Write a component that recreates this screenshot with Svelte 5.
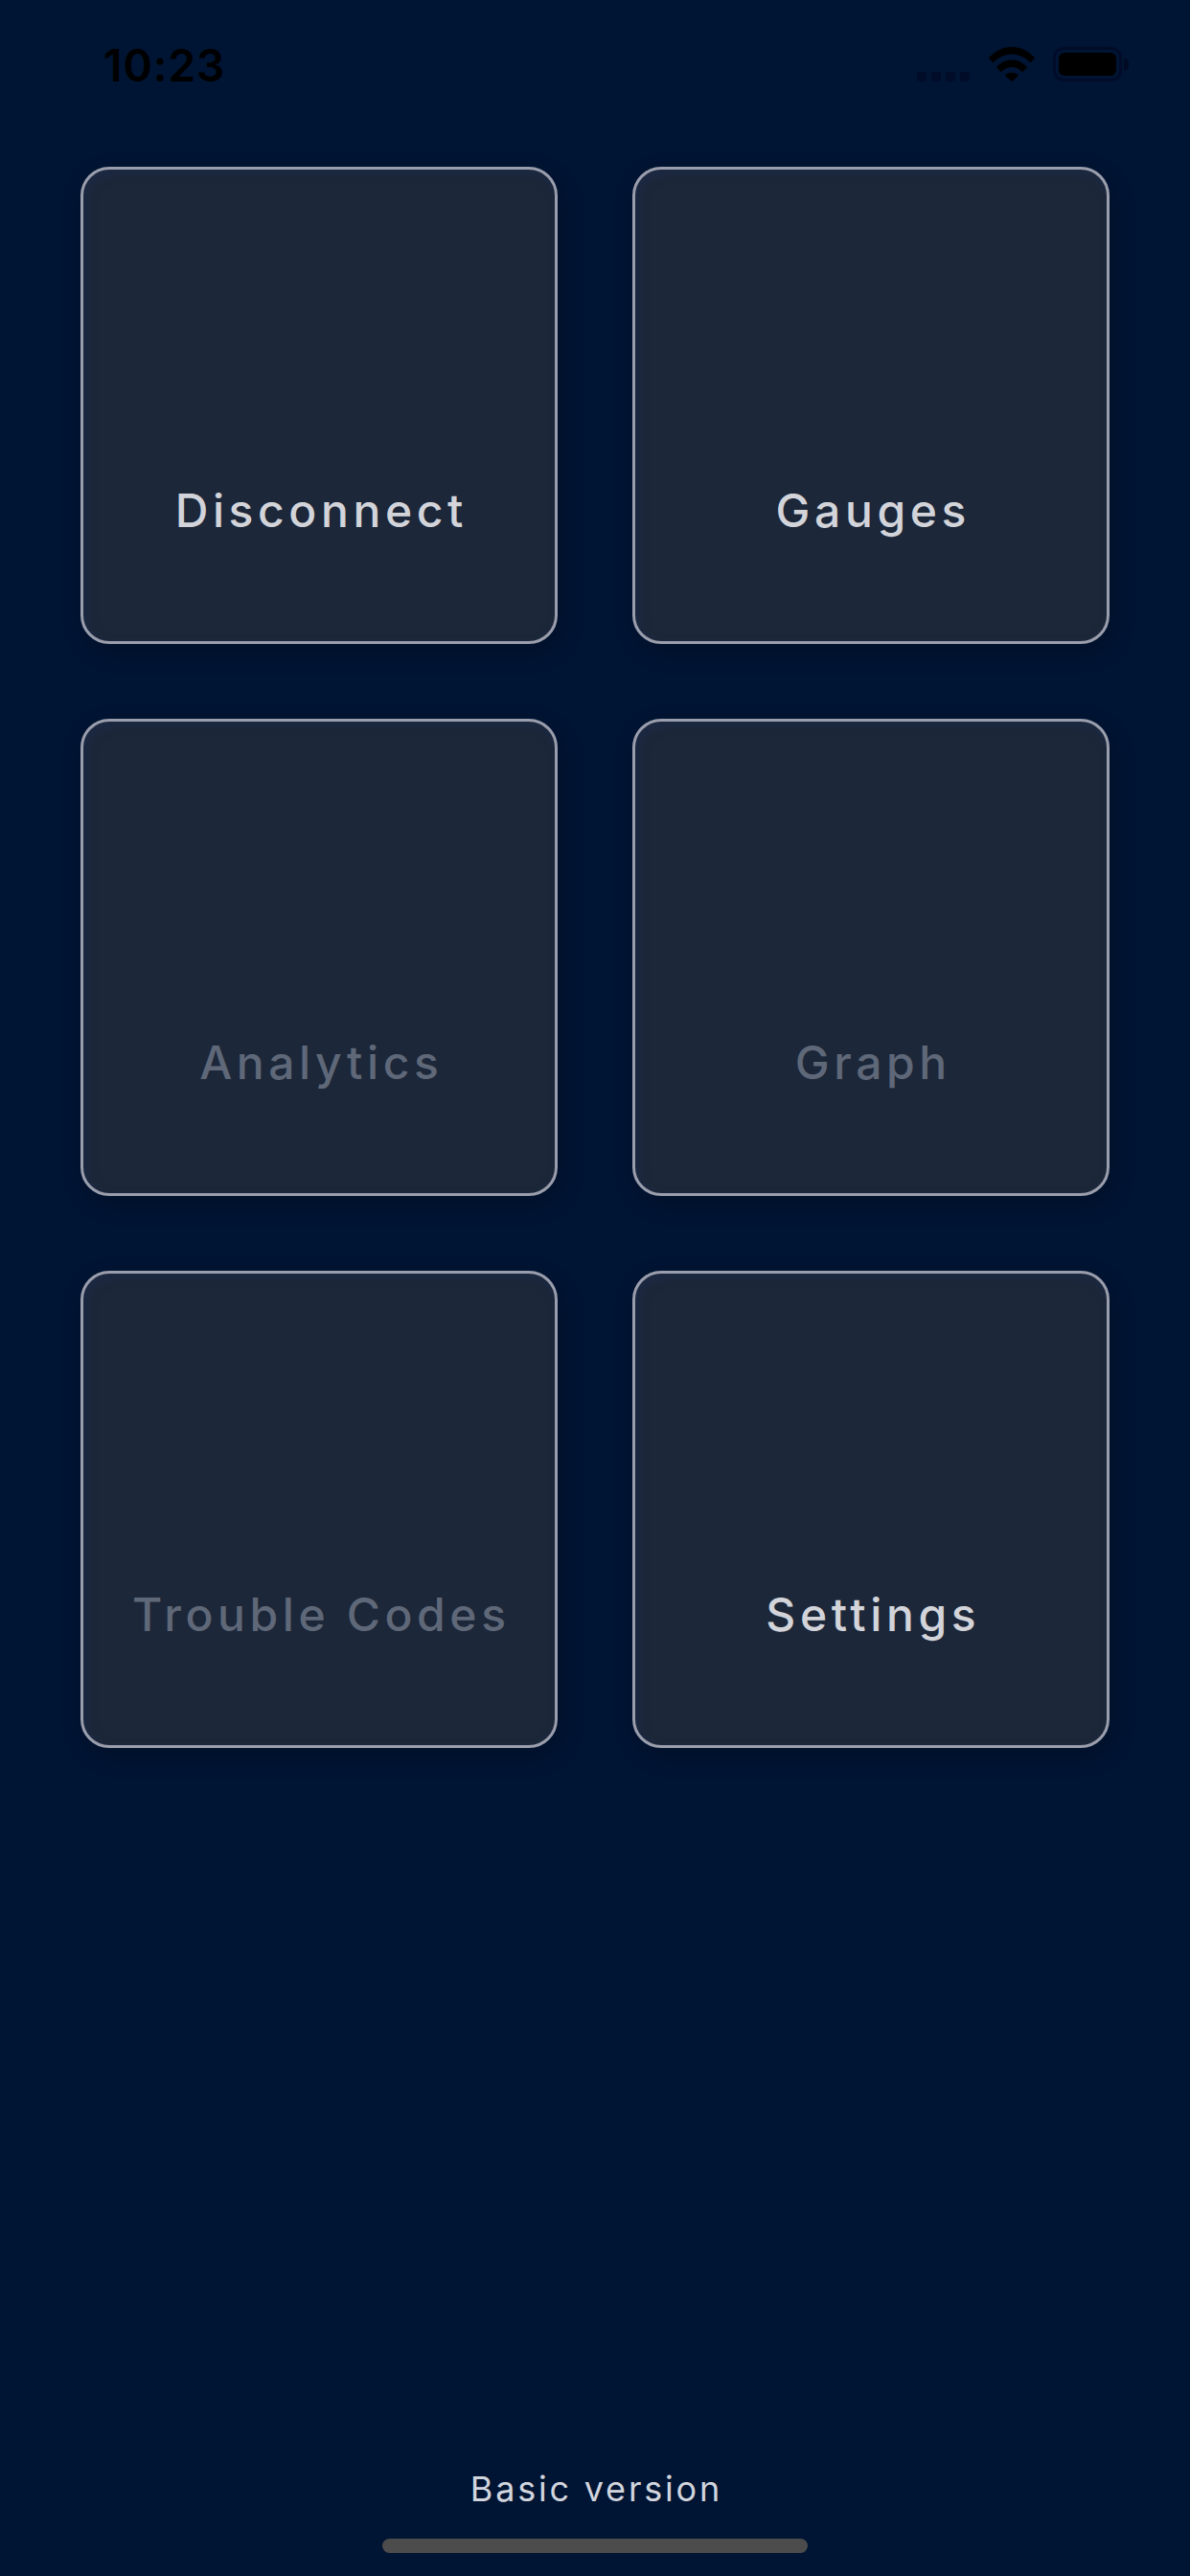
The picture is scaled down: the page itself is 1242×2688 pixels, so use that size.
<script>
  const items = [
    { label: 'Disconnect', off: false },
    { label: 'Gauges', off: false },
    { label: 'Analytics', off: true },
    { label: 'Graph', off: true },
    { label: 'Trouble Codes', off: true },
    { label: 'Settings', off: false }
  ];
</script>

<div class="screen">
  <header class="status">
    <span class="time">10:23</span>
    <div class="icons">
      <div class="dots"><i></i><i></i><i></i><i></i></div>
      <svg class="wifi" width="48" height="36" viewBox="0 0 48 36">
        <path d="M0 11.500C6 4.500 14.500 0 24 0s18 4.500 24 11.500l-4.500 5C38.500 11 31.500 7.500 24 7.500S9.500 11 4.500 16.500z" fill="#000"/>
        <path d="M8 21C12 16.500 17.700 13.500 24 13.500s12 3 16 7.500l-4.800 5.200C32.300 23 28.300 21 24 21s-8.300 2-11.200 5.200z" fill="#000"/>
        <path d="M16.800 29.800c1.900-1.900 4.400-3 7.200-3s5.300 1.100 7.200 3L24 36z" fill="#000"/>
      </svg>
      <div class="battery"><div class="cell"><b></b></div><span class="nub"></span></div>
    </div>
  </header>

  <main class="grid">
    {#each items as item}
      <div class="card" class:off={item.off}><span>{item.label}</span></div>
    {/each}
  </main>

  <footer class="foot">
    <span class="version">Basic version</span>
    <div class="home"></div>
  </footer>
</div>

<style>
  :global(body) { margin: 0; background: #001433; }
  .screen {
    width: 1242px;
    height: 2688px;
    background: #001433;
    display: flex;
    flex-direction: column;
    font-family: Inter, "Liberation Sans", sans-serif;
    overflow: hidden;
  }
  .status {
    height: 174px;
    box-sizing: border-box;
    padding: 44px 64px 0 108px;
    display: flex;
    justify-content: space-between;
    align-items: flex-start;
  }
  .time {
    font-size: 46px;
    font-weight: 600;
    line-height: 48px;
    color: #000;
    letter-spacing: 1px;
  }
  .icons {
    display: flex;
    align-items: flex-start;
    padding-top: 5px;
  }
  .dots {
    display: flex;
    gap: 5px;
    margin-top: 26px;
    margin-right: 20px;
  }
  .dots i {
    width: 10px;
    height: 10px;
    border-radius: 3px;
    background: #000c28;
  }
  .wifi { margin-right: 19px; }
  .battery { display: flex; align-items: center; }
  .cell {
    width: 72px;
    height: 36px;
    box-sizing: border-box;
    border: 3px solid #000c28;
    border-radius: 11px;
    padding: 3px;
  }
  .cell b {
    display: block;
    width: 100%;
    height: 100%;
    border-radius: 6px;
    background: #000;
  }
  .nub {
    width: 5px;
    height: 13px;
    margin-left: 2px;
    background: #000a22;
    border-radius: 0 6px 6px 0;
  }
  .grid {
    display: grid;
    grid-template-columns: 498px 498px;
    grid-auto-rows: 498px;
    gap: 78px;
    padding-left: 84px;
  }
  .card {
    box-sizing: border-box;
    border: 3px solid #9a9eac;
    border-radius: 30px;
    background: #1c2739;
    box-shadow: 4px 8px 24px rgba(0, 0, 0, 0.2), inset 3px 4px 12px rgba(28, 48, 96, 0.3);
    display: flex;
    justify-content: center;
    align-items: flex-end;
    padding-bottom: 107px;
  }
  .card span {
    font-size: 48px;
    font-weight: 500;
    line-height: 58px;
    letter-spacing: 4.6px;
    padding-left: 4.6px;
    color: #d2d4da;
  }
  .card.off span { color: #5f6878; }
  .foot {
    margin-top: auto;
    display: flex;
    flex-direction: column;
    align-items: center;
    padding-bottom: 24px;
  }
  .version {
    font-size: 36px;
    line-height: 44px;
    letter-spacing: 2.8px;
    padding-left: 2.8px;
    color: #d2d5de;
    margin-bottom: 30px;
  }
  .home {
    width: 444px;
    height: 15px;
    border-radius: 8px;
    background: #4c4c4c;
  }
</style>
